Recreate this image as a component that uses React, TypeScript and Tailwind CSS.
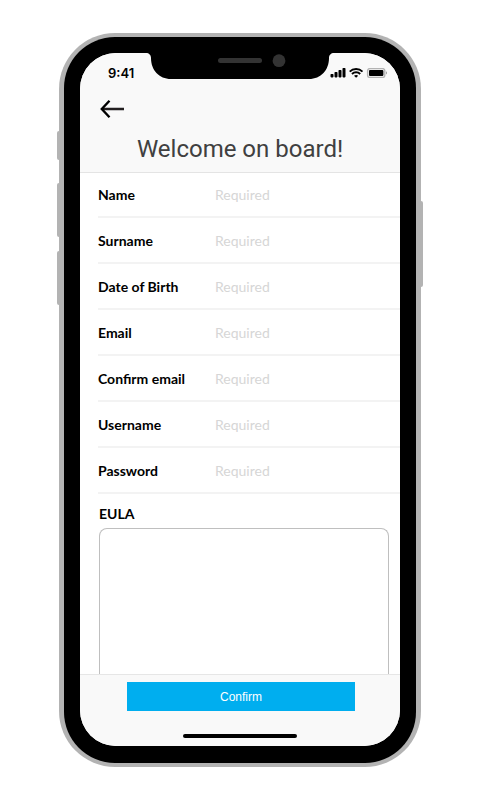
import React from "react";

type Field = { id: string; label: string; type: string };

const fields: Field[] = [
  { id: "name", label: "Name", type: "text" },
  { id: "surname", label: "Surname", type: "text" },
  { id: "birth", label: "Date of Birth", type: "text" },
  { id: "email", label: "Email", type: "email" },
  { id: "confirm-email", label: "Confirm email", type: "email" },
  { id: "username", label: "Username", type: "text" },
  { id: "password", label: "Password", type: "password" },
];

function Notch() {
  return (
    <svg
      className="absolute top-0 left-1/2 -translate-x-1/2"
      width="188"
      height="26"
      viewBox="0 0 188 26"
      aria-hidden="true"
    >
      <path
        d="M0 0H188C185 0 183 2 183 5C183 17 175 26 163 26H25C13 26 5 17 5 5C5 2 3 0 0 0Z"
        fill="#000"
      />
      <rect x="72" y="5" width="44" height="5" rx="2.5" fill="#333" />
      <circle cx="133" cy="7.7" r="6.4" fill="#333" />
    </svg>
  );
}

function StatusIcons() {
  return (
    <svg width="58" height="10" viewBox="0 0 58 10" aria-hidden="true">
      <rect x="0.5" y="6" width="3" height="3.4" rx="0.8" />
      <rect x="4.5" y="4" width="3" height="5.4" rx="0.8" />
      <rect x="8.5" y="2" width="3" height="7.4" rx="0.8" />
      <rect x="12.5" y="0" width="3" height="9.4" rx="0.8" />
      <g fill="none" stroke="#000" strokeWidth="1.9">
        <path d="M19.7 3.7C23.2 0.1 29 0.1 32.5 3.7" />
        <path d="M22 6C24.3 3.7 27.9 3.7 30.2 6" />
      </g>
      <path d="M24 7.8Q26.1 6 28.2 7.8L26.1 9.8Z" />
      <rect x="37.6" y="0.6" width="17.2" height="8.8" rx="2.2" fill="none" stroke="#b3b3b3" strokeWidth="1.4" />
      <rect x="39" y="2" width="14.4" height="6" rx="1" />
      <path d="M56 3.2Q58 4.9 56 6.6Z" fill="#999" />
    </svg>
  );
}

export default function App() {
  return (
    <main className="flex min-h-screen items-start justify-center bg-white px-4 py-[33px] font-['Lato','Open_Sans',sans-serif]">
      <div className="relative w-full max-w-[362px] rounded-[56px] bg-[#b3b3b3] px-[5px] py-1">
        <span className="absolute top-[98px] -left-0.5 h-[29px] w-0.5 rounded-l-sm bg-[#b3b3b3]" />
        <span className="absolute top-[150px] -left-0.5 h-[54px] w-0.5 rounded-l-sm bg-[#b3b3b3]" />
        <span className="absolute top-[218px] -left-0.5 h-[54px] w-0.5 rounded-l-sm bg-[#b3b3b3]" />
        <span className="absolute top-[168px] -right-0.5 h-[86px] w-0.5 rounded-r-sm bg-[#b3b3b3]" />

        <div className="rounded-[51px] bg-black px-4 pt-4 pb-[17px]">
          <div className="relative overflow-hidden rounded-[36px] bg-white">
            <Notch />
            <header className="border-b border-[#e4e4e4] bg-[#f9f9f9] pb-[9px]">
              <div className="flex items-center justify-between pt-2.5 pr-3 pl-7">
                <span className="font-[Inter,sans-serif] text-[13px] leading-5 font-semibold">
                  9:41
                </span>
                <StatusIcons />
              </div>
              <button type="button" aria-label="Back" className="mt-4 ml-5 block">
                <svg width="25" height="20" viewBox="0 0 25 20" fill="none">
                  <path d="M2 10H24" stroke="#231f20" strokeWidth="2.6" />
                  <path d="M9.5 1.8L1.8 10L9.5 18.2" stroke="#000" strokeWidth="2.4" />
                </svg>
              </button>
              <h1 className="mt-4 text-center font-[Roboto,sans-serif] text-2xl leading-7 text-[#404040]">
                Welcome on board!
              </h1>
            </header>

            <form onSubmit={(e) => e.preventDefault()}>
              <div className="-mt-px pl-[18px]">
                {fields.map((f) => (
                  <div
                    key={f.id}
                    className="flex h-[46px] items-center border-b-2 border-[#f3f3f3] pt-0.5 text-sm"
                  >
                    <label htmlFor={f.id} className="w-[117px] shrink-0 font-bold text-black">
                      {f.label}
                    </label>
                    <input
                      id={f.id}
                      type={f.type}
                      placeholder="Required"
                      className="min-w-0 flex-1 bg-transparent outline-none placeholder:text-[#d6d6d6]"
                    />
                  </div>
                ))}
              </div>

              <div className="pt-2.5 pr-[11px] pl-[19px]">
                <label htmlFor="eula" className="block text-sm leading-5 font-bold text-black">
                  EULA
                </label>
                <textarea
                  id="eula"
                  readOnly
                  className="mt-1 block h-[146px] w-full resize-none rounded-t-lg border border-b-0 border-[#bfbfbf] bg-white p-2 text-sm outline-none"
                />
              </div>

              <footer className="border-t border-[#e6e6e6] bg-[#f9f9f9] px-[45px] pt-[7px] pb-2">
                <div className="pl-0.5">
                  <button
                    type="submit"
                    className="block h-[29px] w-full bg-[#00aeef] font-['Liberation_Sans',sans-serif] text-xs text-white"
                  >
                    Confirm
                  </button>
                </div>
                <div className="mx-auto mt-[23px] h-1 w-[114px] rounded-full bg-black" />
              </footer>
            </form>
          </div>
        </div>
      </div>
    </main>
  );
}
